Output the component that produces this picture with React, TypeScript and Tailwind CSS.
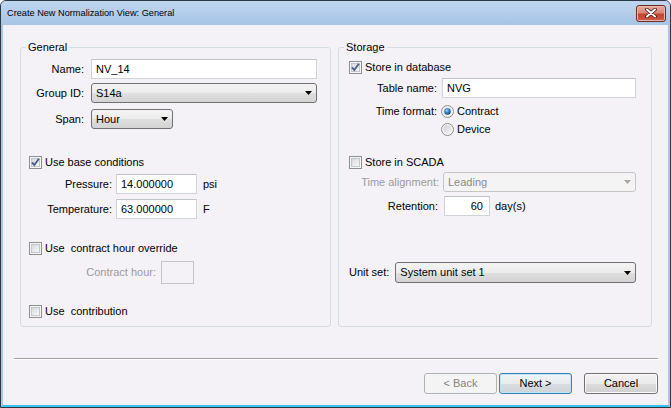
import { ReactNode } from 'react';

const Checkbox = ({ checked }: { checked?: boolean }) => (
  <svg width="13" height="13" viewBox="0 0 13 13" className="shrink-0">
    <defs>
      <linearGradient id="cbFill" x1="0" y1="0" x2="1" y2="1">
        <stop offset="0" stopColor="#d6d7d9" />
        <stop offset="1" stopColor="#fafafa" />
      </linearGradient>
    </defs>
    <rect x="0.5" y="0.5" width="12" height="12" fill="#f7f7f7" stroke="#8e8f8f" />
    <rect x="2.5" y="2.5" width="8" height="8" fill="url(#cbFill)" stroke="#c3c6ca" />
    {checked && (
      <path d="M3 6.3 L5.3 9 L9.9 2.8" fill="none" stroke="#4b5f8f" strokeWidth="1.9" />
    )}
  </svg>
);

const Radio = ({ checked }: { checked?: boolean }) => (
  <svg width="13" height="13" viewBox="0 0 13 13" className="shrink-0">
    <defs>
      <linearGradient id="rdFill" x1="0" y1="0" x2="1" y2="1">
        <stop offset="0" stopColor="#cfd0d2" />
        <stop offset="1" stopColor="#f6f6f6" />
      </linearGradient>
      <radialGradient id="rdDot" cx="0.4" cy="0.35" r="0.7">
        <stop offset="0" stopColor="#9fd6f7" />
        <stop offset="0.5" stopColor="#2f7fbf" />
        <stop offset="1" stopColor="#173e63" />
      </radialGradient>
    </defs>
    <circle cx="6.5" cy="6.5" r="6" fill="#f4f4f4" stroke="#8e8f8f" />
    <circle cx="6.5" cy="6.5" r="4.2" fill="url(#rdFill)" />
    {checked && <circle cx="6.5" cy="6.5" r="3.2" fill="url(#rdDot)" />}
  </svg>
);

const TextBox = ({
  children,
  className,
  right,
}: {
  children?: ReactNode;
  className?: string;
  right?: boolean;
}) => (
  <div
    className={`h-[20px] shrink-0 bg-white border border-[#d0d4d9] border-t-[#bfc3c8] flex items-center px-[4px] ${
      right ? 'justify-end pr-[6px]' : ''
    } ${className ?? ''}`}
  >
    {children}
  </div>
);

const Combo = ({
  value,
  className,
  disabled,
}: {
  value: string;
  className?: string;
  disabled?: boolean;
}) => (
  <div
    className={`h-[20px] shrink-0 rounded-[3px] border flex items-center pl-[4px] pr-[4px] ${
      disabled
        ? 'border-[#c6c6c6] bg-[#f4f4f4] text-[#8a8a8a]'
        : 'border-[#707070] bg-[linear-gradient(to_bottom,#f4f4f4_0%,#ececec_50%,#dfdfdf_51%,#d3d3d3_100%)]'
    } ${className ?? ''}`}
  >
    <span className="flex-1">{value}</span>
    <svg width="7" height="4" viewBox="0 0 7 4">
      <path d="M0 0 H7 L3.5 4 Z" fill={disabled ? '#a5a5a5' : '#000'} />
    </svg>
  </div>
);

const Button = ({
  children,
  kind,
  className,
}: {
  children: ReactNode;
  kind?: 'default' | 'disabled';
  className?: string;
}) => (
  <div
    className={`h-[21px] rounded-[3px] border flex items-center justify-center ${
      kind === 'disabled'
        ? 'border-[#adb2b5] bg-[#f4f4f4] text-[#838383]'
        : kind === 'default'
        ? 'border-[#3c7fb1] shadow-[inset_0_0_0_1px_#bfe6fa] bg-[linear-gradient(to_bottom,#f0f4f7_0%,#e8ecef_50%,#d8dde1_51%,#cdd3d8_100%)]'
        : 'border-[#707070] shadow-[inset_0_0_0_1px_#fbfbfb] bg-[linear-gradient(to_bottom,#f2f2f2_0%,#ebebeb_50%,#dddddd_51%,#cfcfcf_100%)]'
    } ${className ?? ''}`}
  >
    {children}
  </div>
);

const GroupBox = ({
  title,
  children,
  className,
}: {
  title: string;
  children: ReactNode;
  className?: string;
}) => (
  <div className={`h-[280px] border border-[#d5dde3] rounded-[3px] flex flex-col ${className ?? ''}`}>
    <span className="-mt-[7px] ml-[5px] px-[2px] self-start bg-[#f4f2f6] leading-[13px]">{title}</span>
    {children}
  </div>
);

const CloseButton = () => (
  <div className="ml-auto w-[30px] h-[17px] rounded-[3px] border border-[#6b2a25] bg-[linear-gradient(to_bottom,#e6aa9f_0%,#d98676_45%,#c4442f_55%,#cc5a48_100%)] shadow-[inset_0_0_0_1px_#eab7ae] flex items-center justify-center">
    <svg width="12" height="10" viewBox="0 0 12 10">
      <path d="M2 1.5 L10 8.5 M10 1.5 L2 8.5" stroke="#3b1512" strokeWidth="3.6" strokeLinecap="round" />
      <path d="M2 1.5 L10 8.5 M10 1.5 L2 8.5" stroke="#ffffff" strokeWidth="2" strokeLinecap="round" />
    </svg>
  </div>
);

export default function App() {
  return (
    <div className="w-[671px] h-[408px] flex flex-col border border-[#2a3848] rounded-t-[6px] overflow-hidden bg-[#a9c6e8] font-['Liberation_Sans',Arial,sans-serif] text-[11px] leading-[13px] text-black">
      <div className="h-[24px] shrink-0 flex items-center pl-[6px] pr-[4px] bg-linear-to-b from-[#c0d6ee] to-[#a7c4e6]">
        <span className="text-[9.2px]">Create New Normalization View: General</span>
        <CloseButton />
      </div>

      <div className="flex-1 flex flex-col bg-[#f4f2f6] border-x-2 border-x-[#a9c6e8] border-b-2 border-b-[#3fc2ea]">
        <div className="flex mt-[22px] ml-[17px] gap-[7px]">
          <GroupBox title="General" className="w-[311px]">
            <div className="flex flex-col pl-[8px]">
              <div className="flex items-center mt-[5px]">
                <span className="w-[55px] mr-[7px] text-right">Name:</span>
                <TextBox className="w-[226px]">NV_14</TextBox>
              </div>
              <div className="flex items-center mt-[4px]">
                <span className="w-[55px] mr-[7px] text-right">Group ID:</span>
                <Combo value="S14a" className="w-[226px]" />
              </div>
              <div className="flex items-center mt-[6px]">
                <span className="w-[55px] mr-[7px] text-right">Span:</span>
                <Combo value="Hour" className="w-[82px]" />
              </div>

              <div className="flex items-center h-[13px] mt-[27px]">
                <Checkbox checked />
                <span className="ml-[3px]">Use base conditions</span>
              </div>
              <div className="flex items-center mt-[5px]">
                <span className="w-[83px] mr-[4px] text-right">Pressure:</span>
                <TextBox className="w-[81px]">14.000000</TextBox>
                <span className="ml-[6px]">psi</span>
              </div>
              <div className="flex items-center mt-[5px]">
                <span className="w-[83px] mr-[4px] text-right">Temperature:</span>
                <TextBox className="w-[81px]">63.000000</TextBox>
                <span className="ml-[6px]">F</span>
              </div>

              <div className="flex items-center h-[13px] mt-[23px]">
                <Checkbox />
                <span className="ml-[3px]">Use&nbsp; contract hour override</span>
              </div>
              <div className="flex items-center mt-[6px]">
                <span className="w-[127px] mr-[5px] text-right text-[#9b9b9b]">Contract hour:</span>
                <div className="w-[33px] h-[23px] border border-[#c3c7cc]" />
              </div>

              <div className="flex items-center h-[13px] mt-[21px]">
                <Checkbox />
                <span className="ml-[3px]">Use&nbsp; contribution</span>
              </div>
            </div>
          </GroupBox>

          <GroupBox title="Storage" className="w-[314px]">
            <div className="flex flex-col pl-[10px]">
              <div className="flex items-center h-[13px] mt-[7px]">
                <Checkbox checked />
                <span className="ml-[3px]">Store in database</span>
              </div>
              <div className="flex items-center mt-[4px]">
                <span className="w-[88px] mr-[5px] text-right">Table name:</span>
                <TextBox className="w-[194px]">NVG</TextBox>
              </div>
              <div className="flex items-center h-[13px] mt-[7px]">
                <span className="w-[88px] mr-[4px] text-right">Time format:</span>
                <Radio checked />
                <span className="ml-[3px]">Contract</span>
              </div>
              <div className="flex items-center h-[13px] mt-[5px] pl-[92px]">
                <Radio />
                <span className="ml-[3px]">Device</span>
              </div>

              <div className="flex items-center h-[13px] mt-[20px]">
                <Checkbox />
                <span className="ml-[3px]">Store in SCADA</span>
              </div>
              <div className="flex items-center mt-[3px]">
                <span className="w-[90px] mr-[4px] text-right text-[#9b9b9b]">Time alignment:</span>
                <Combo value="Leading" disabled className="w-[193px]" />
              </div>
              <div className="flex items-center mt-[4px]">
                <span className="w-[89px] mr-[6px] text-right">Retention:</span>
                <TextBox right className="w-[46px]">60</TextBox>
                <span className="ml-[5px]">day(s)</span>
              </div>

              <div className="flex items-center mt-[46px]">
                <span className="mr-[6px]">Unit set:</span>
                <Combo value="System unit set 1" className="w-[241px] h-[21px]" />
              </div>
            </div>
          </GroupBox>
        </div>

        <div className="mt-[31px] ml-[11px] w-[644px] border-t border-t-[#a0a0a0] border-b border-b-white" />

        <div className="mt-[13px] flex justify-end pr-[10px]">
          <Button kind="disabled" className="w-[73px]">&lt; Back</Button>
          <Button kind="default" className="w-[73px] ml-[2px]">Next &gt;</Button>
          <Button className="w-[74px] ml-[12px]">Cancel</Button>
        </div>
      </div>
    </div>
  );
}
